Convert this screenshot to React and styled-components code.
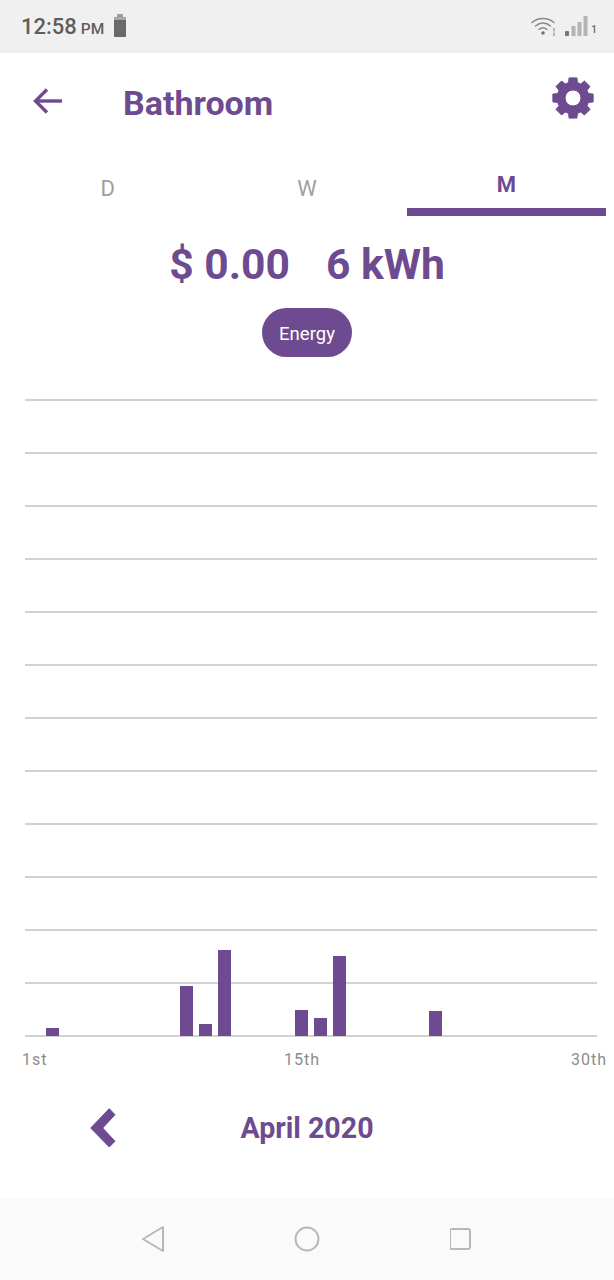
import React from 'react';
import styled, { createGlobalStyle } from 'styled-components';

const PURPLE = '#6e4b90';

const GlobalStyle = createGlobalStyle`
  html, body {
    margin: 0;
    padding: 0;
    background: #fff;
    font-family: Roboto, "Liberation Sans", sans-serif;
  }
`;

const Page = styled.div`
  display: flex;
  flex-direction: column;
  width: 614px;
  height: 1280px;
  overflow: hidden;
`;

const StatusBar = styled.div`
  flex: none;
  display: flex;
  align-items: center;
  height: 53px;
  padding: 0 17px 0 21px;
  background: #f0f0f0;
  color: #5e5e5e;
`;
const Clock = styled.span`
  font-size: 22px;
  font-weight: 500;
`;
const Meridiem = styled.span`
  margin-left: 4px;
  font-size: 15.5px;
  font-weight: 500;
  align-self: center;
  padding-top: 4px;
`;
const BatteryIcon = styled.svg`
  margin-left: 9px;
  margin-bottom: 4px;
`;
const StatusRight = styled.div`
  display: flex;
  align-items: center;
  gap: 8px;
  margin-left: auto;
  margin-bottom: 1px;
`;
const SimNumber = styled.span`
  align-self: flex-end;
  margin-left: -5px;
  font-size: 10px;
  font-weight: 500;
  line-height: 12px;
`;

const Header = styled.div`
  flex: none;
  display: flex;
  align-items: center;
  height: 100px;
  padding: 0 20px 0 33px;
`;
const ArrowIcon = styled.svg`
  margin-bottom: 4px;
`;
const Title = styled.h1`
  margin: 0 0 0 61px;
  color: ${PURPLE};
  font-size: 34px;
  font-weight: 700;
  line-height: 1;
`;
const GearIcon = styled.svg`
  margin-left: auto;
  margin-bottom: 10px;
`;

const Tabs = styled.div`
  flex: none;
  display: grid;
  grid-template-columns: repeat(3, 1fr);
  height: 63px;
  padding: 0 8px;
`;
const Tab = styled.div`
  display: flex;
  align-items: center;
  justify-content: center;
  padding-top: 7px;
  border-bottom: ${(p) => (p.$active ? `8px solid ${PURPLE}` : 'none')};
  color: ${(p) => (p.$active ? PURPLE : '#a0a0a0')};
  font-size: 22px;
  font-weight: ${(p) => (p.$active ? 700 : 400)};
`;

const Summary = styled.div`
  flex: none;
  display: flex;
  justify-content: center;
  gap: 36px;
  margin-top: 23px;
  padding-bottom: 1px;
  color: ${PURPLE};
  font-size: 42.6px;
  font-weight: 700;
  line-height: 50px;
`;

const Pill = styled.div`
  flex: none;
  align-self: center;
  display: flex;
  align-items: center;
  justify-content: center;
  width: 90px;
  height: 49px;
  margin-top: 18px;
  padding-top: 2px;
  box-sizing: border-box;
  border-radius: 25px;
  background: ${PURPLE};
  color: #fff;
  font-size: 18.5px;
`;

const Chart = styled.div`
  flex: none;
  position: relative;
  margin: 42px 17px 0 25px;
  border-bottom: 2px solid #d2d2d2;
`;
const GridRow = styled.div`
  height: 51px;
  border-top: 2px solid #d2d2d2;
`;
const Bars = styled.div`
  position: absolute;
  left: -1.6px;
  right: -2px;
  bottom: -1px;
  height: 100px;
  display: grid;
  grid-template-columns: repeat(30, 1fr);
  align-items: end;
  justify-items: center;
`;
const Bar = styled.div`
  width: 13px;
  background: ${PURPLE};
`;

const AxisLabels = styled.div`
  flex: none;
  display: grid;
  grid-template-columns: 262px auto 1fr;
  margin-top: 13px;
  padding: 0 7px 0 22px;
  color: #8c8c8c;
  font-size: 16px;
  letter-spacing: 1px;
  line-height: 20px;
`;
const LastLabel = styled.span`
  justify-self: end;
`;

const MonthRow = styled.div`
  flex: none;
  display: grid;
  grid-template-columns: 1fr auto 1fr;
  align-items: center;
  margin-top: 34px;
  padding: 0 90px;
  height: 48px;
`;
const MonthName = styled.div`
  color: ${PURPLE};
  font-size: 28.6px;
  font-weight: 700;
`;

const NavBar = styled.div`
  flex: none;
  display: flex;
  align-items: center;
  justify-content: center;
  gap: 130px;
  margin-top: auto;
  height: 82px;
  background: #fafafa;
`;

const STROKE = '#b8b8b8';

const DAILY_USE = [
  { day: 1, height: 8 },
  { day: 8, height: 50 },
  { day: 9, height: 12 },
  { day: 10, height: 86 },
  { day: 14, height: 26 },
  { day: 15, height: 18 },
  { day: 16, height: 80 },
  { day: 21, height: 25 },
];

// eight square teeth around a round hub, hole cut with evenodd
function gearPath() {
  const point = (r, deg) => {
    const a = (deg * Math.PI) / 180;
    return `${(21 + r * Math.sin(a)).toFixed(2)} ${(21 - r * Math.cos(a)).toFixed(2)}`;
  };
  let d = '';
  for (let i = 0; i < 8; i++) {
    const c = i * 45;
    d += `${i ? 'L' : 'M'}${point(16, c - 16)}L${point(20.5, c - 11)}L${point(20.5, c + 11)}L${point(16, c + 16)}`;
  }
  return `${d}Z M29 21a8 8 0 1 0-16 0a8 8 0 1 0 16 0Z`;
}

function Battery() {
  return (
    <BatteryIcon width="14" height="24" viewBox="0 0 14 24">
      <path d="M4 2a1 1 0 0 1 1-1h4a1 1 0 0 1 1 1v2H4z" fill="#9a9a9a" />
      <path d="M1 5h12v18a1 1 0 0 1-1 1H2a1 1 0 0 1-1-1z" fill="#6a6a6a" />
      <rect x="1" y="4" width="12" height="3" fill="#a8a8a8" />
    </BatteryIcon>
  );
}

function Wifi() {
  return (
    <svg width="26" height="20" viewBox="0 0 26 20" fill="none" stroke="#8a8a8a" strokeWidth="1.5" strokeLinecap="round">
      <path d="M1 6.5C7 1 17 1 23 6.5" />
      <path d="M4.5 10C9 6 15 6 19.5 10" />
      <path d="M8 13.5c2.5-2.2 5.5-2.2 8 0" />
      <circle cx="12" cy="17" r="1.8" fill="#6f6f6f" stroke="none" />
      <path d="M23 12.5v2.5M23 17v2.5" stroke="#a5a5a5" strokeWidth="1.6" />
    </svg>
  );
}

function Signal() {
  return (
    <svg width="23" height="20" viewBox="0 0 23 20">
      <rect x="0" y="15" width="4" height="5" rx="1" fill="#777" />
      <rect x="6.5" y="10" width="4" height="10" fill="#b4b4b4" />
      <rect x="12.5" y="6" width="4" height="14" fill="#b4b4b4" />
      <rect x="18.5" y="0" width="4" height="20" fill="#b4b4b4" />
    </svg>
  );
}

function BackArrow() {
  return (
    <ArrowIcon width="29" height="26" viewBox="0 0 29 26" fill="none" stroke={PURPLE} strokeWidth="3.4">
      <path d="M29 13H3" />
      <path d="M14 1.5L2.5 13 14 24.5" />
    </ArrowIcon>
  );
}

export default function App() {
  return (
    <Page>
      <GlobalStyle />
      <StatusBar>
        <Clock>12:58</Clock>
        <Meridiem>PM</Meridiem>
        <Battery />
        <StatusRight>
          <Wifi />
          <Signal />
          <SimNumber>1</SimNumber>
        </StatusRight>
      </StatusBar>

      <Header>
        <BackArrow />
        <Title>Bathroom</Title>
        <GearIcon width="42" height="42" viewBox="0 0 42 42">
          <path d={gearPath()} fill={PURPLE} fillRule="evenodd" stroke={PURPLE} strokeWidth="1" strokeLinejoin="round" />
        </GearIcon>
      </Header>

      <Tabs>
        <Tab>D</Tab>
        <Tab>W</Tab>
        <Tab $active>M</Tab>
      </Tabs>

      <Summary>
        <span>$ 0.00</span>
        <span>6 kWh</span>
      </Summary>
      <Pill>Energy</Pill>

      <Chart>
        {Array.from({ length: 12 }, (_, i) => <GridRow key={i} />)}
        <Bars>
          {DAILY_USE.map((d) => (
            <Bar key={d.day} style={{ gridColumn: d.day + 1, height: d.height }} />
          ))}
        </Bars>
      </Chart>
      <AxisLabels>
        <span>1st</span>
        <span>15th</span>
        <LastLabel>30th</LastLabel>
      </AxisLabels>

      <MonthRow>
        <svg width="26" height="40" viewBox="0 0 26 40">
          <path d="M.7 20L19.3.7 25 6.7 12.7 20 25 33.3 19.3 39z" fill={PURPLE} stroke={PURPLE} strokeLinejoin="round" />
        </svg>
        <MonthName>April 2020</MonthName>
      </MonthRow>

      <NavBar>
        <svg width="24" height="28" viewBox="0 0 24 28" fill="none" stroke={STROKE} strokeWidth="2" strokeLinejoin="round">
          <path d="M23 2v24L3 14z" />
        </svg>
        <svg width="26" height="26" viewBox="0 0 26 26" fill="none" stroke={STROKE} strokeWidth="2">
          <circle cx="13" cy="13" r="11.5" />
        </svg>
        <svg width="24" height="24" viewBox="0 0 24 24" fill="none" stroke={STROKE} strokeWidth="2">
          <rect x="0" y="2" width="20" height="20" rx="2" />
        </svg>
      </NavBar>
    </Page>
  );
}
